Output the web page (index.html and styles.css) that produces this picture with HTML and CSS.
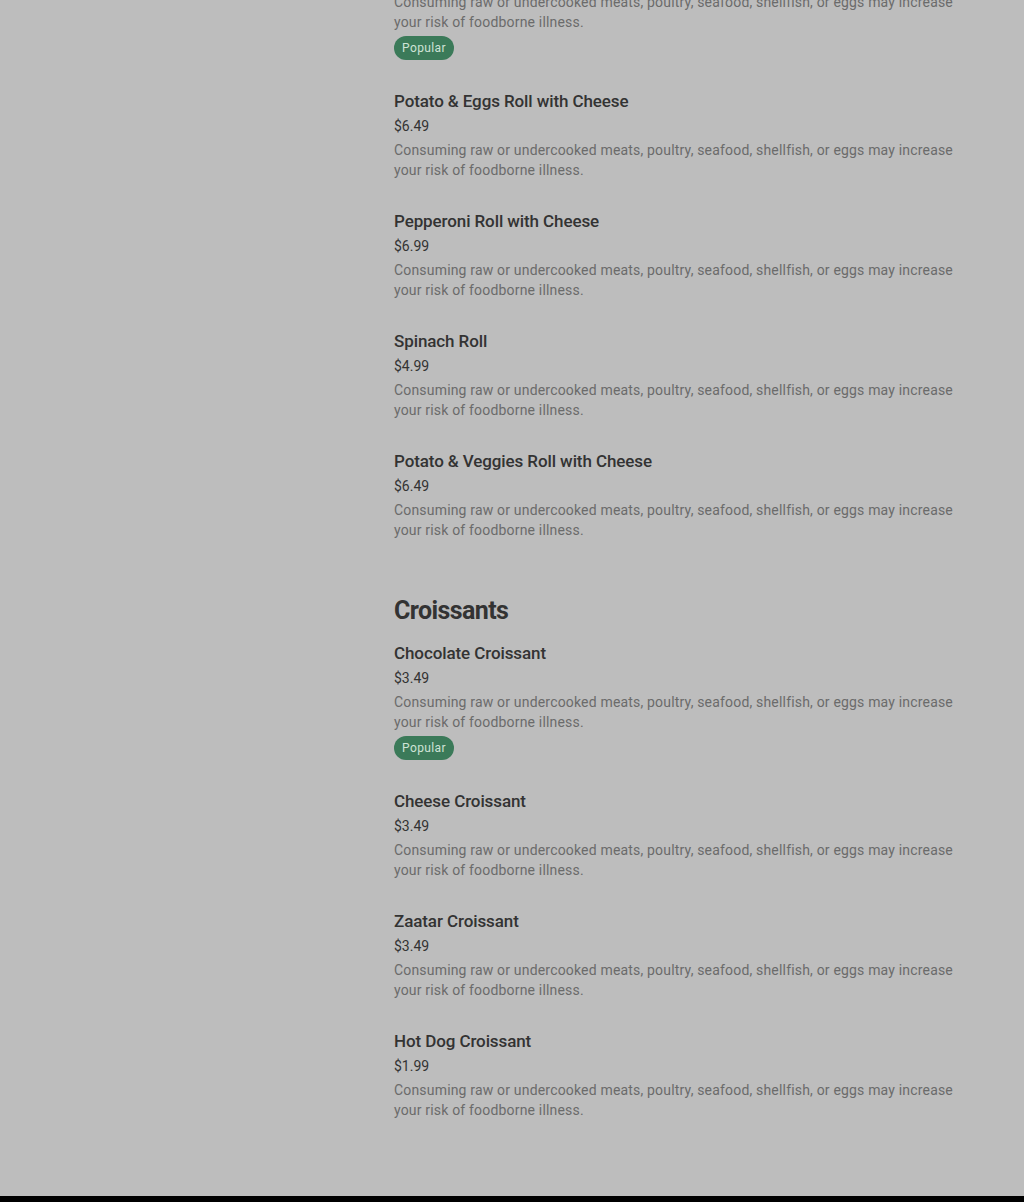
FILE: index.html
```html
<!DOCTYPE html>
<html lang="en">
<head>
<meta charset="utf-8">
<title>Menu</title>
<link rel="stylesheet" href="styles.css">
</head>
<body>
<div class="page">
  <aside class="sidebar"></aside>
  <main class="menu">
    <section class="section">
      <div class="item">
        <p class="desc">Consuming raw or undercooked meats, poultry, seafood, shellfish, or eggs may increase your risk of foodborne illness.</p>
        <span class="badge">Popular</span>
      </div>
      <div class="item">
        <h3 class="title">Potato &amp; Eggs Roll with Cheese</h3>
        <div class="price">$6.49</div>
        <p class="desc">Consuming raw or undercooked meats, poultry, seafood, shellfish, or eggs may increase your risk of foodborne illness.</p>
      </div>
      <div class="item">
        <h3 class="title">Pepperoni Roll with Cheese</h3>
        <div class="price">$6.99</div>
        <p class="desc">Consuming raw or undercooked meats, poultry, seafood, shellfish, or eggs may increase your risk of foodborne illness.</p>
      </div>
      <div class="item">
        <h3 class="title">Spinach Roll</h3>
        <div class="price">$4.99</div>
        <p class="desc">Consuming raw or undercooked meats, poultry, seafood, shellfish, or eggs may increase your risk of foodborne illness.</p>
      </div>
      <div class="item">
        <h3 class="title">Potato &amp; Veggies Roll with Cheese</h3>
        <div class="price">$6.49</div>
        <p class="desc">Consuming raw or undercooked meats, poultry, seafood, shellfish, or eggs may increase your risk of foodborne illness.</p>
      </div>
    </section>
    <section class="section">
      <h2 class="section-title">Croissants</h2>
      <div class="item">
        <h3 class="title">Chocolate Croissant</h3>
        <div class="price">$3.49</div>
        <p class="desc">Consuming raw or undercooked meats, poultry, seafood, shellfish, or eggs may increase your risk of foodborne illness.</p>
        <span class="badge">Popular</span>
      </div>
      <div class="item">
        <h3 class="title">Cheese Croissant</h3>
        <div class="price">$3.49</div>
        <p class="desc">Consuming raw or undercooked meats, poultry, seafood, shellfish, or eggs may increase your risk of foodborne illness.</p>
      </div>
      <div class="item">
        <h3 class="title">Zaatar Croissant</h3>
        <div class="price">$3.49</div>
        <p class="desc">Consuming raw or undercooked meats, poultry, seafood, shellfish, or eggs may increase your risk of foodborne illness.</p>
      </div>
      <div class="item">
        <h3 class="title">Hot Dog Croissant</h3>
        <div class="price">$1.99</div>
        <p class="desc">Consuming raw or undercooked meats, poultry, seafood, shellfish, or eggs may increase your risk of foodborne illness.</p>
      </div>
    </section>
  </main>
</div>
<footer class="footer"></footer>
</body>
</html>
```
FILE: styles.css
```css
html, body {
  margin: 0;
  padding: 0;
  background: #bdbdbd;
}
body {
  font-family: Roboto, "Liberation Sans", sans-serif;
  color: #2f2f2f;
}
.page {
  display: grid;
  grid-template-columns: 394px 575px;
  margin-top: -10px;
  padding-bottom: 47px;
}
.sidebar {
  min-height: 1px;
}
.menu {
  display: flex;
  flex-direction: column;
  gap: 26px;
}
.section {
  display: flex;
  flex-direction: column;
}
.section-title {
  margin: 0 0 14px;
  font-size: 25px;
  line-height: 32px;
  font-weight: 700;
  letter-spacing: -0.6px;
  color: #333;
}
.item {
  display: flex;
  flex-direction: column;
  align-items: flex-start;
  padding-bottom: 29px;
}
.title {
  margin: 0;
  font-size: 17px;
  line-height: 24px;
  font-weight: 500;
  letter-spacing: -0.1px;
  color: #333;
}
.price {
  margin-top: 1px;
  font-size: 14px;
  line-height: 24px;
  color: #333;
}
.desc {
  margin: 2px 0 0;
  font-size: 14px;
  line-height: 20px;
  letter-spacing: 0.18px;
  color: #6b6b6b;
}
.badge {
  margin-top: 4px;
  height: 24px;
  padding: 0 8px;
  border-radius: 12px;
  background: #3b7a59;
  color: #cfe3d6;
  font-size: 12px;
  line-height: 24px;
  letter-spacing: 0.4px;
}
.footer {
  height: 40px;
  background: #000;
}
```
